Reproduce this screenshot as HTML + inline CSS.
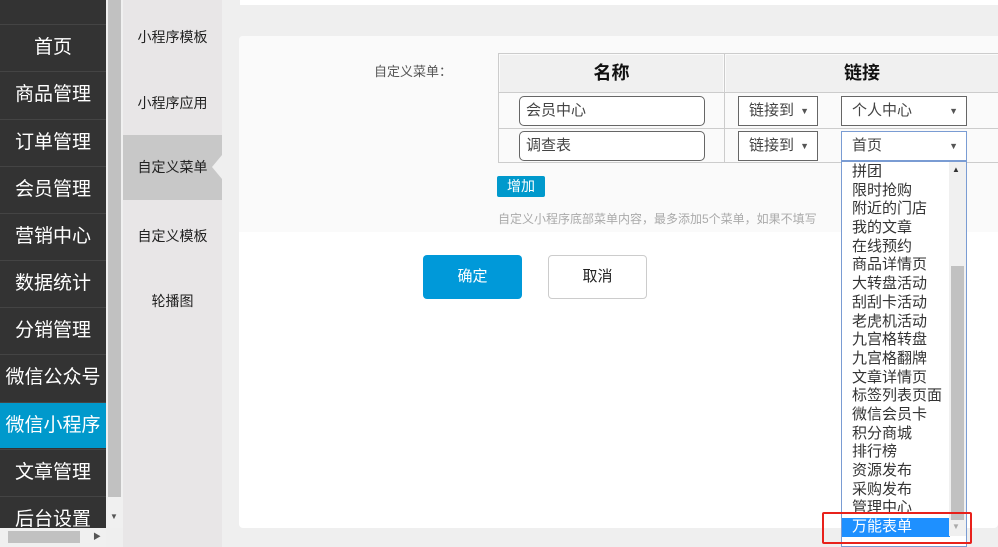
<!DOCTYPE html>
<html><head><meta charset="utf-8"><style>
*{margin:0;padding:0;box-sizing:border-box}
body{width:998px;height:547px;overflow:hidden;background:#efefef;font-family:"Liberation Sans","Noto Sans CJK SC",sans-serif;position:relative}
.a{position:absolute}
.nav{left:0;top:0;width:106px;height:547px;background:#333}
.ni{position:absolute;left:0;width:106px;height:47px;border-top:1px solid #444;color:#fff;font-size:19px;text-align:center;line-height:46px}
.sub{left:123px;top:0;width:99px;height:547px;background:#e8e6e7}
.si{position:absolute;left:0;width:99px;text-align:center;font-size:14px;color:#222}
.tri{position:absolute;right:0;width:0;height:0;border-top:12px solid transparent;border-bottom:12px solid transparent;border-right:10px solid #efefef}
.inp{position:absolute;border:1px solid #666;border-radius:5px;background:#fff;font-size:15px;color:#444;padding-left:6px;line-height:28px;height:30px}
.sel{position:absolute;border:1px solid #666;background:#fff;font-size:15px;color:#444;padding-left:10px;line-height:28px;height:30px}
.sel i{position:absolute;right:8px;top:0;line-height:28px;font-style:normal;font-size:9px;color:#555}
.dd div{height:18.7px;line-height:18.7px;font-size:15px;color:#333;padding-left:10px}
</style></head><body>
<div class="a" style="left:240px;top:0;width:758px;height:5px;background:#fff"></div>
<div class="a" style="left:239px;top:36px;width:759px;height:492px;background:#fff;border-radius:4px"></div>
<div class="a" style="left:239px;top:36px;width:759px;height:196px;background:#fafafa;border-radius:4px 0 0 0"></div>

<div class="a nav">
<div class="ni" style="top:-23px"></div>
<div class="ni" style="top:24px">首页</div>
<div class="ni" style="top:71px">商品管理</div>
<div class="ni" style="top:119px">订单管理</div>
<div class="ni" style="top:166px">会员管理</div>
<div class="ni" style="top:213px">营销中心</div>
<div class="ni" style="top:260px">数据统计</div>
<div class="ni" style="top:307px">分销管理</div>
<div class="ni" style="top:354px">微信公众号</div>
<div class="ni" style="top:402px;background:#0099cc;height:46px">微信小程序</div>
<div class="ni" style="top:449px">文章管理</div>
<div class="ni" style="top:496px">后台设置</div>
</div>
<div class="a" style="left:106px;top:0;width:17px;height:528px;background:#f0f0f0"></div>
<div class="a" style="left:108px;top:0;width:13px;height:497px;background:#c1c1c1"></div>
<div class="a" style="left:110px;top:512px;font-size:8px;color:#555">▼</div>
<div class="a" style="left:0;top:528px;width:106px;height:19px;background:#f0f0f0"></div>
<div class="a" style="left:8px;top:531px;width:72px;height:12px;background:#c1c1c1"></div>
<div class="a" style="left:93px;top:531px;font-size:8px;color:#555">▶</div>

<div class="a sub">
<div class="si" style="top:27px">小程序模板</div>
<div class="si" style="top:93px">小程序应用</div>
<div class="si" style="top:135px;height:65px;line-height:65px;background:#c8c8c8">自定义菜单<div class="tri" style="top:20px"></div></div>
<div class="si" style="top:226px">自定义模板</div>
<div class="si" style="top:291px">轮播图</div>
</div>

<div class="a" style="left:374px;top:61px;font-size:13px;color:#555">自定义菜单：</div>
<div class="a" style="left:498px;top:53px;width:500px;height:110px;border-top:1px solid #ccc;border-left:1px solid #ccc"></div>
<div class="a" style="left:500px;top:55px;width:223px;height:37px;background:#f0f0f0;font-size:18px;font-weight:bold;text-align:center;line-height:37px;color:#111">名称</div>
<div class="a" style="left:726px;top:55px;width:272px;height:37px;background:#f0f0f0;font-size:18px;font-weight:bold;text-align:center;line-height:37px;color:#111">链接</div>
<div class="a" style="left:724px;top:53px;width:1px;height:110px;background:#ccc"></div>
<div class="a" style="left:498px;top:92px;width:500px;height:1px;background:#ccc"></div>
<div class="a" style="left:498px;top:128px;width:500px;height:1px;background:#ccc"></div>
<div class="a" style="left:498px;top:162px;width:500px;height:1px;background:#ccc"></div>
<div class="inp" style="left:519px;top:96px;width:186px">会员中心</div>
<div class="inp" style="left:519px;top:131px;width:186px">调查表</div>
<div class="sel" style="left:738px;top:96px;width:80px">链接到<i>▼</i></div>
<div class="sel" style="left:738px;top:131px;width:80px">链接到<i>▼</i></div>
<div class="sel" style="left:841px;top:96px;width:126px">个人中心<i>▼</i></div>
<div class="sel" style="left:841px;top:131px;width:126px;border-color:#7a9cd3">首页<i>▼</i></div>
<div class="a" style="left:497px;top:176px;width:48px;height:21px;background:#0099cc;border-radius:2px;color:#fff;font-size:14px;text-align:center;line-height:21px">增加</div>
<div class="a" style="left:498px;top:210px;font-size:12px;color:#aaa;white-space:nowrap">自定义小程序底部菜单内容，最多添加5个菜单，如果不填写</div>

<div class="a" style="left:423px;top:255px;width:99px;height:44px;background:#0099d9;border-radius:4px;color:#fff;font-size:15px;text-align:center;line-height:44px">确定</div>
<div class="a" style="left:548px;top:255px;width:99px;height:44px;border:1px solid #ccc;background:#fff;border-radius:4px;color:#222;font-size:15px;text-align:center;line-height:42px">取消</div>

<div class="a dd" style="left:841px;top:161px;width:126px;height:386px;background:#fff;border:1px solid #7a9cd3;padding-top:1px">
<div>拼团</div><div>限时抢购</div><div>附近的门店</div><div>我的文章</div><div>在线预约</div><div>商品详情页</div><div>大转盘活动</div><div>刮刮卡活动</div><div>老虎机活动</div><div>九宫格转盘</div><div>九宫格翻牌</div><div>文章详情页</div><div>标签列表页面</div><div>微信会员卡</div><div>积分商城</div><div>排行榜</div><div>资源发布</div><div>采购发布</div><div>管理中心</div>
<div style="background:#1e90ff;color:#fff;width:108px">万能表单</div>
</div>
<div class="a" style="left:949px;top:162px;width:17px;height:374px;background:#f0f0f0"></div>
<div class="a" style="left:951px;top:266px;width:13px;height:254px;background:#c1c1c1"></div>
<div class="a" style="left:952px;top:165px;font-size:8px;color:#333">▲</div>
<div class="a" style="left:952px;top:522px;font-size:8px;color:#aaa">▼</div>
<div class="a" style="left:822px;top:512px;width:150px;height:32px;border:2px solid #e8211b;border-radius:2px"></div>
</body></html>
